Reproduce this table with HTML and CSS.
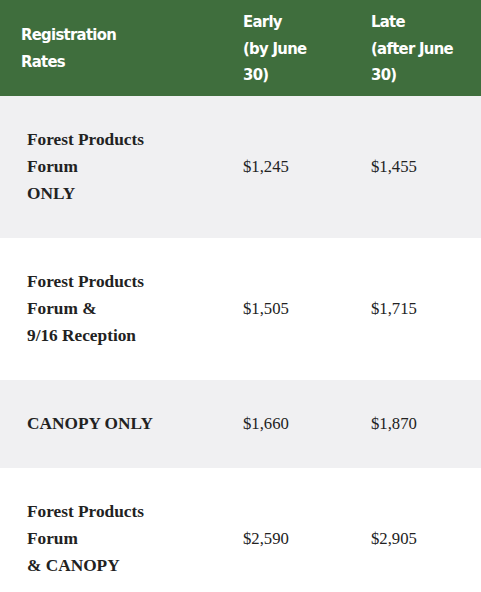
FILE: index.html
```html
<!DOCTYPE html>
<html>
<head>
<meta charset="utf-8">
<link rel="stylesheet" href="styles.css">
</head>
<body>
<table class="rates">
  <colgroup>
    <col class="c1"><col class="c2"><col class="c3">
  </colgroup>
  <thead>
    <tr>
      <th>Registration<br>Rates</th>
      <th>Early<br>(by June<br>30)</th>
      <th>Late<br>(after June<br>30)</th>
    </tr>
  </thead>
  <tbody>
    <tr class="alt">
      <td class="name">Forest Products<br>Forum<br>ONLY</td>
      <td>$1,245</td>
      <td>$1,455</td>
    </tr>
    <tr>
      <td class="name">Forest Products<br>Forum &amp;<br>9/16 Reception</td>
      <td>$1,505</td>
      <td>$1,715</td>
    </tr>
    <tr class="alt">
      <td class="name">CANOPY ONLY</td>
      <td>$1,660</td>
      <td>$1,870</td>
    </tr>
    <tr>
      <td class="name">Forest Products<br>Forum<br>&amp; CANOPY</td>
      <td>$2,590</td>
      <td>$2,905</td>
    </tr>
  </tbody>
</table>
</body>
</html>
```

FILE: styles.css
```css
html, body {
  margin: 0;
  padding: 0;
  background: #ffffff;
}
.rates {
  width: 481px;
  border-collapse: collapse;
  table-layout: fixed;
  font-family: "Liberation Serif", serif;
  font-size: 16.7px;
  color: #222222;
}
.c1 { width: 216px; }
.c2 { width: 128px; }
.c3 { width: 137px; }
.rates th {
  background: #3f6e3d;
  color: #ffffff;
  font-family: "DejaVu Sans Condensed", "DejaVu Sans", sans-serif;
  font-stretch: condensed;
  font-weight: bold;
  font-size: 16.5px;
  letter-spacing: -0.7px;
  line-height: 26.5px;
  text-align: left;
  vertical-align: middle;
  white-space: nowrap;
  padding: 9px 8px 7px 21px;
}
.rates th + th {
  padding-left: 27px;
}
.rates td {
  padding: 30px 8px 31px 27px;
  line-height: 27px;
  vertical-align: middle;
  white-space: nowrap;
}
.rates td.name {
  font-weight: bold;
  font-size: 17.3px;
}
.rates tr.alt td {
  background: #f0f0f2;
}
```
